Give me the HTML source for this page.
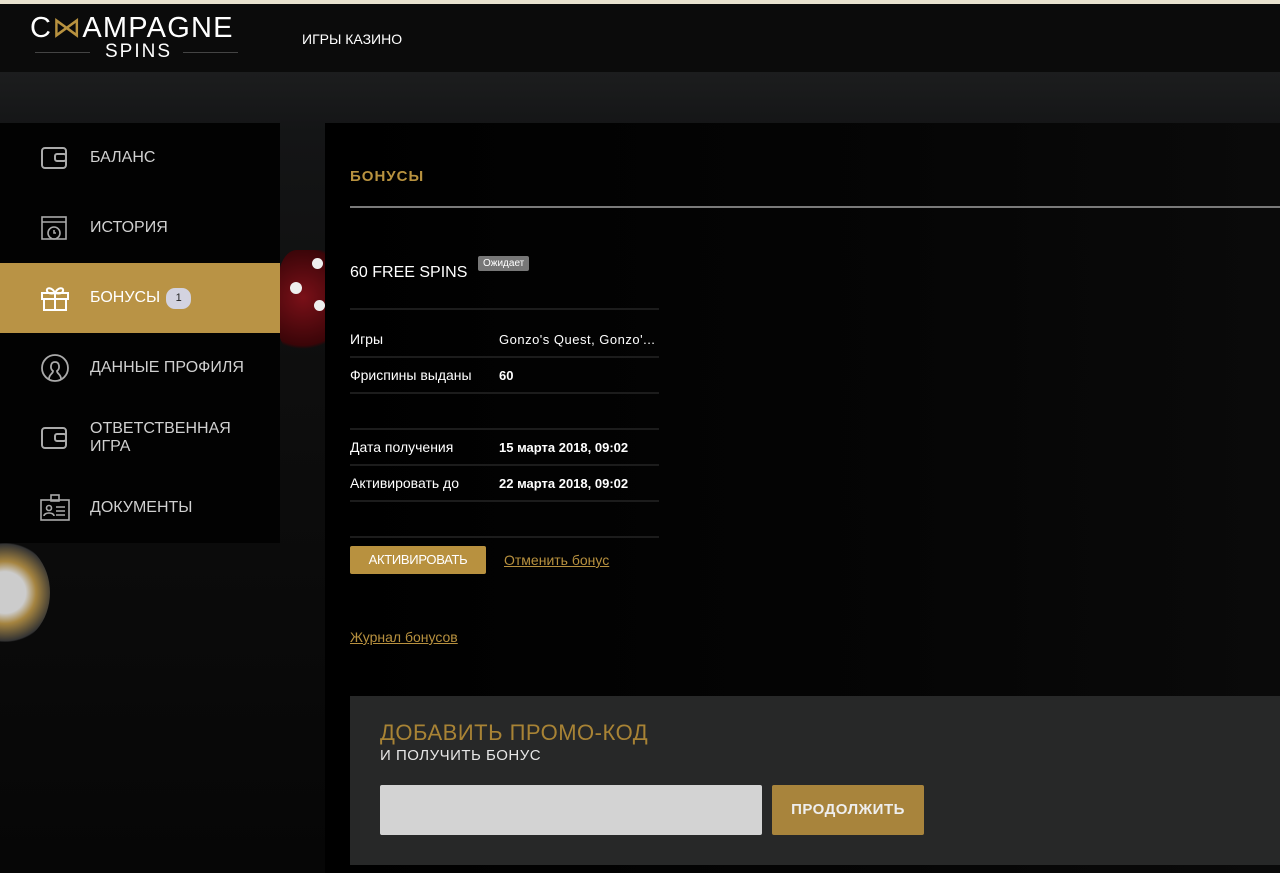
<!DOCTYPE html>
<html><head><meta charset="utf-8"><style>
*{margin:0;padding:0;box-sizing:border-box}
body{width:1280px;height:873px;overflow:hidden;background:#111;font-family:"Liberation Sans",sans-serif;position:relative;color:#fff}
.top{position:absolute;left:0;top:0;width:1280px;height:4px;background:#e8e2cf}
.hdr{position:absolute;left:0;top:4px;width:1280px;height:68px;background:#0b0b0b}
.band{position:absolute;left:0;top:72px;width:1280px;height:801px;background:linear-gradient(#1c1d1e,#141516 60px,#0e0e0e 300px,#060606)}
.logo1{position:absolute;left:30px;top:10px;font-size:29px;letter-spacing:1.2px;color:#fff}
.logo1 b{color:#b8923f;font-weight:normal}
.logo2{position:absolute;left:105px;top:41px;font-size:19px;letter-spacing:2px}
.ln{position:absolute;top:52px;height:1px;background:#444;width:55px}
.nav{position:absolute;left:302px;top:31px;font-size:14px}
.side{position:absolute;left:0;top:123px;width:280px;height:420px;background:#020202}
.it{position:absolute;left:0;width:280px;height:70px;font-size:16px;color:#d0d0d0;display:flex;align-items:center;padding-left:90px}
.it svg{position:absolute;left:40px;top:50%;transform:translateY(-50%)}
.act{background:#b99345;color:#fff}
.badge{display:inline-block;background:#d3d3e0;color:#222;font-size:11px;border-radius:9px;width:25px;height:21px;line-height:21px;text-align:center;margin-left:6px}
.main{position:absolute;left:325px;top:123px;width:955px;height:750px;background:linear-gradient(90deg,#000,#050505 60%,#0a0a0a)}
.h1{position:absolute;left:350px;top:168px;font-size:15px;font-weight:bold;color:#b8923f;letter-spacing:1px}
.hr{position:absolute;left:350px;top:206px;width:930px;height:2px;background:#7a7a7a}
.fs{position:absolute;left:350px;top:264px;font-size:16px}
.pend{position:absolute;left:478px;top:256px;background:#777;color:#fff;font-size:10px;padding:2px 5px;border-radius:2px}
.rl{position:absolute;left:350px;width:309px;height:2px;background:#1c1c1c}
.lab{position:absolute;left:350px;font-size:14px}
.val{position:absolute;left:499px;font-size:13px;font-weight:bold}
.btn{position:absolute;left:350px;top:546px;width:136px;height:28px;background:#b8913f;border-radius:2px;font-size:13px;text-align:center;line-height:28px;letter-spacing:-.3px}
.lk{position:absolute;font-size:14px;color:#b8913f;text-decoration:underline}
.promo{position:absolute;left:350px;top:696px;width:930px;height:169px;background:#272828}
.p1{position:absolute;left:30px;top:24px;font-size:22px;color:#a88335;letter-spacing:.5px}
.p2{position:absolute;left:30px;top:51px;font-size:15px;color:#e6e6e6;letter-spacing:.5px}
.inp{position:absolute;left:30px;top:89px;width:382px;height:50px;background:#d3d3d3;border-radius:2px}
.go{position:absolute;left:422px;top:89px;width:152px;height:50px;background:#a8843c;border-radius:2px;text-align:center;line-height:50px;font-size:15px;font-weight:bold;color:#eee;letter-spacing:.5px}
</style></head><body>
<div class="band"></div>
<div class="hdr"></div><div class="top"></div>
<div class="logo1">C<b>⋈</b>AMPAGNE</div>
<div class="ln" style="left:35px"></div><div class="ln" style="left:183px"></div>
<div class="logo2">SPINS</div>
<div class="nav">ИГРЫ КАЗИНО</div>
<div style="position:absolute;left:278px;top:250px;width:62px;height:105px;border-radius:30%;background:radial-gradient(circle at 40% 45%,#7a1018,#3a0508 70%,transparent 75%)"></div>
<div style="position:absolute;left:312px;top:258px;width:11px;height:11px;border-radius:50%;background:#eee"></div>
<div style="position:absolute;left:290px;top:282px;width:12px;height:12px;border-radius:50%;background:#eee"></div>
<div style="position:absolute;left:314px;top:300px;width:11px;height:11px;border-radius:50%;background:#eee"></div>
<div style="position:absolute;left:-40px;top:540px;width:90px;height:105px;border-radius:50%;background:radial-gradient(circle,#ccc 30%,#a58440 45%,#333 70%,transparent 72%)"></div>
<div class="side">
<div class="it" style="top:0"><svg width="28" height="24" viewBox="0 0 28 24" fill="none" stroke="#aaa" stroke-width="2"><rect x="2" y="2" width="24" height="20" rx="3"/><rect x="15" y="8" width="11" height="7" rx="2"/></svg>БАЛАНС</div>
<div class="it" style="top:70px"><svg width="28" height="28" viewBox="0 0 28 28" fill="none" stroke="#aaa" stroke-width="1.6"><rect x="2" y="3" width="24" height="22"/><line x1="2" y1="8" x2="26" y2="8"/><circle cx="14" cy="19" r="6"/><path d="M14 16v3h2"/></svg>ИСТОРИЯ</div>
<div class="it act" style="top:140px"><svg width="30" height="28" viewBox="0 0 30 28" fill="none" stroke="#fff" stroke-width="2"><rect x="2" y="9" width="26" height="6"/><rect x="4" y="15" width="22" height="11"/><line x1="15" y1="9" x2="15" y2="26"/><path d="M15 9c-3-6-9-6-8-2s8 2 8 2c3-6 9-6 8-2s-8 2-8 2"/></svg>БОНУСЫ<span class="badge">1</span></div>
<div class="it" style="top:210px"><svg width="30" height="30" viewBox="0 0 30 30" fill="none" stroke="#aaa" stroke-width="1.8"><circle cx="15" cy="15" r="13"/><path d="M9 26c0-5 4-5 4-8-3-2-3-9 2-9s5 7 2 9c0 3 4 3 4 8"/></svg>ДАННЫЕ ПРОФИЛЯ</div>
<div class="it" style="top:280px;line-height:18px"><svg width="28" height="24" viewBox="0 0 28 24" fill="none" stroke="#aaa" stroke-width="2"><rect x="2" y="2" width="24" height="20" rx="3"/><rect x="15" y="8" width="11" height="7" rx="2"/></svg>ОТВЕТСТВЕННАЯ<br>ИГРА</div>
<div class="it" style="top:350px"><svg width="30" height="28" viewBox="0 0 30 28" fill="none" stroke="#aaa" stroke-width="1.6"><rect x="1" y="6" width="28" height="20"/><rect x="11" y="1" width="8" height="6"/><circle cx="9" cy="14" r="2.5"/><path d="M4 22c0-4 10-4 10 0"/><path d="M16 13h9M16 17h9M16 21h9"/></svg>ДОКУМЕНТЫ</div>
</div>
<div class="main"></div>
<div class="h1">БОНУСЫ</div>
<div class="hr"></div>
<div class="fs">60 FREE SPINS</div><div class="pend">Ожидает</div>
<div class="rl" style="top:308px"></div>
<div class="lab" style="top:331px">Игры</div><div class="val" style="top:332px;font-weight:normal;letter-spacing:.5px">Gonzo's Quest, Gonzo'...</div>
<div class="rl" style="top:356px"></div>
<div class="lab" style="top:367px">Фриспины выданы</div><div class="val" style="top:368px">60</div>
<div class="rl" style="top:392px"></div>
<div class="rl" style="top:428px"></div>
<div class="lab" style="top:439px">Дата получения</div><div class="val" style="top:440px">15 марта 2018, 09:02</div>
<div class="rl" style="top:464px"></div>
<div class="lab" style="top:475px">Активировать до</div><div class="val" style="top:476px">22 марта 2018, 09:02</div>
<div class="rl" style="top:500px"></div>
<div class="rl" style="top:536px"></div>
<div class="btn">АКТИВИРОВАТЬ</div>
<div class="lk" style="left:504px;top:552px">Отменить бонус</div>
<div class="lk" style="left:350px;top:629px">Журнал бонусов</div>
<div class="promo">
<div class="p1">ДОБАВИТЬ ПРОМО-КОД</div>
<div class="p2">И ПОЛУЧИТЬ БОНУС</div>
<div class="inp"></div>
<div class="go">ПРОДОЛЖИТЬ</div>
</div>
</body></html>
